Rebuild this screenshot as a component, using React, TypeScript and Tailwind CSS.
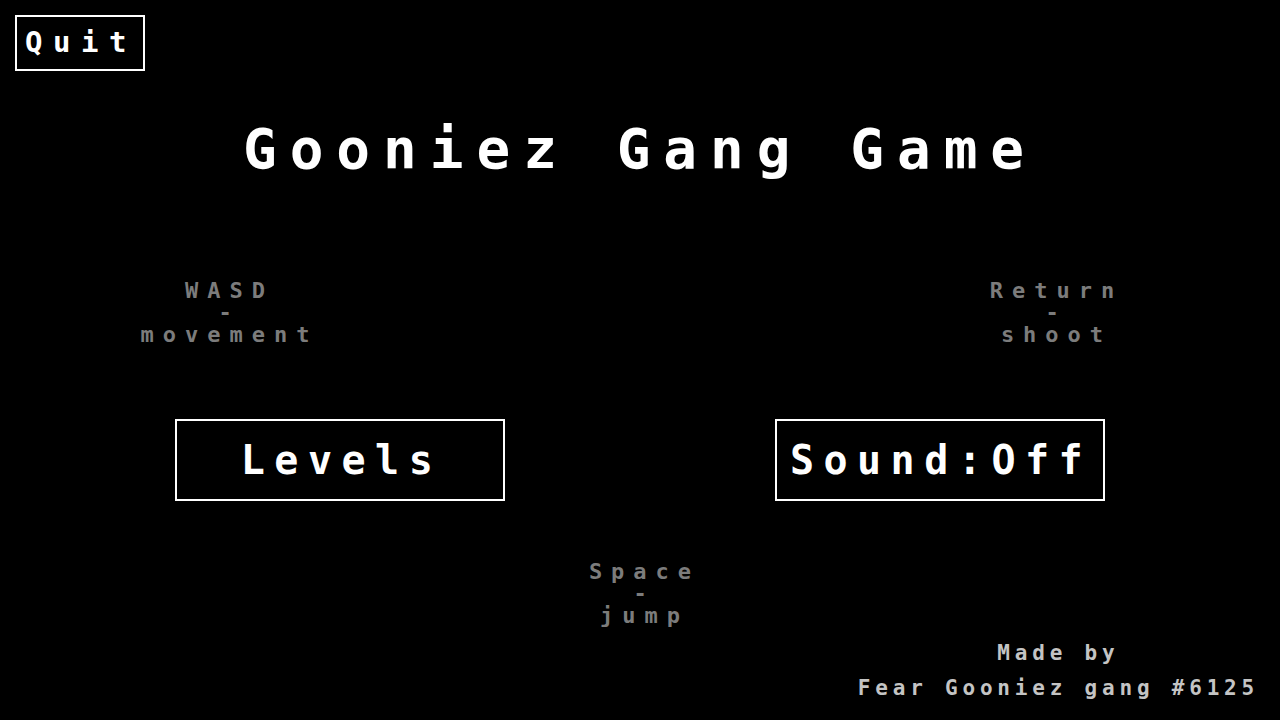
import React, { useState } from 'react';

const font = { fontFamily: '"DejaVu Sans Mono", "Liberation Mono", monospace' };

function Hint({ keyName, action }: { keyName: string; action: string }) {
  return (
    <div className="flex w-[220px] flex-col items-center text-[22px] font-bold leading-[22px] tracking-[9px] text-[#7c7c7c]">
      <span className="pl-[9px]">{keyName}</span>
      <span className="pl-[9px]">-</span>
      <span className="pl-[9px]">{action}</span>
    </div>
  );
}

export default function App() {
  const [sound, setSound] = useState(false);

  return (
    <div className="flex h-[720px] w-[1280px] flex-col overflow-hidden bg-black text-white" style={font}>
      <div className="pl-[15px] pt-[15px]">
        <button className="flex h-[56px] w-[130px] items-center justify-center border-2 border-white pl-[2px] text-[29px] font-bold tracking-[10.5px]">
          Quit
        </button>
      </div>

      <h1 className="mt-[50px] h-[56px] text-center text-[56px] font-bold leading-[56px] tracking-[13px]">
        Gooniez Gang Game
      </h1>

      <div className="mt-[103px] flex justify-between pl-[115px] pr-[118px]">
        <Hint keyName="WASD" action="movement" />
        <Hint keyName="Return" action="shoot" />
      </div>

      <div className="mt-[73px] flex justify-between pl-[175px] pr-[175px]">
        <button className="flex h-[82px] w-[330px] items-center justify-center border-2 border-white pl-[3px] text-[40px] font-bold tracking-[9.5px]">
          Levels
        </button>
        <button
          onClick={() => setSound(s => !s)}
          className="flex h-[82px] w-[330px] items-center justify-center border-2 border-white pl-[2px] text-[40px] font-bold tracking-[9.5px]"
        >
          Sound:{sound ? 'On' : 'Off'}
        </button>
      </div>

      <div className="mt-[60px] flex justify-center">
        <Hint keyName="Space" action="jump" />
      </div>

      <div className="mt-[9px] flex justify-end pr-[21px]">
        <div className="flex flex-col items-center text-[21px] font-bold leading-[35px] tracking-[4.8px] text-[#c4c4c4]">
          <span className="pl-[4.8px]">Made by</span>
          <span className="pl-[4.8px]">Fear Gooniez gang #6125</span>
        </div>
      </div>
    </div>
  );
}
